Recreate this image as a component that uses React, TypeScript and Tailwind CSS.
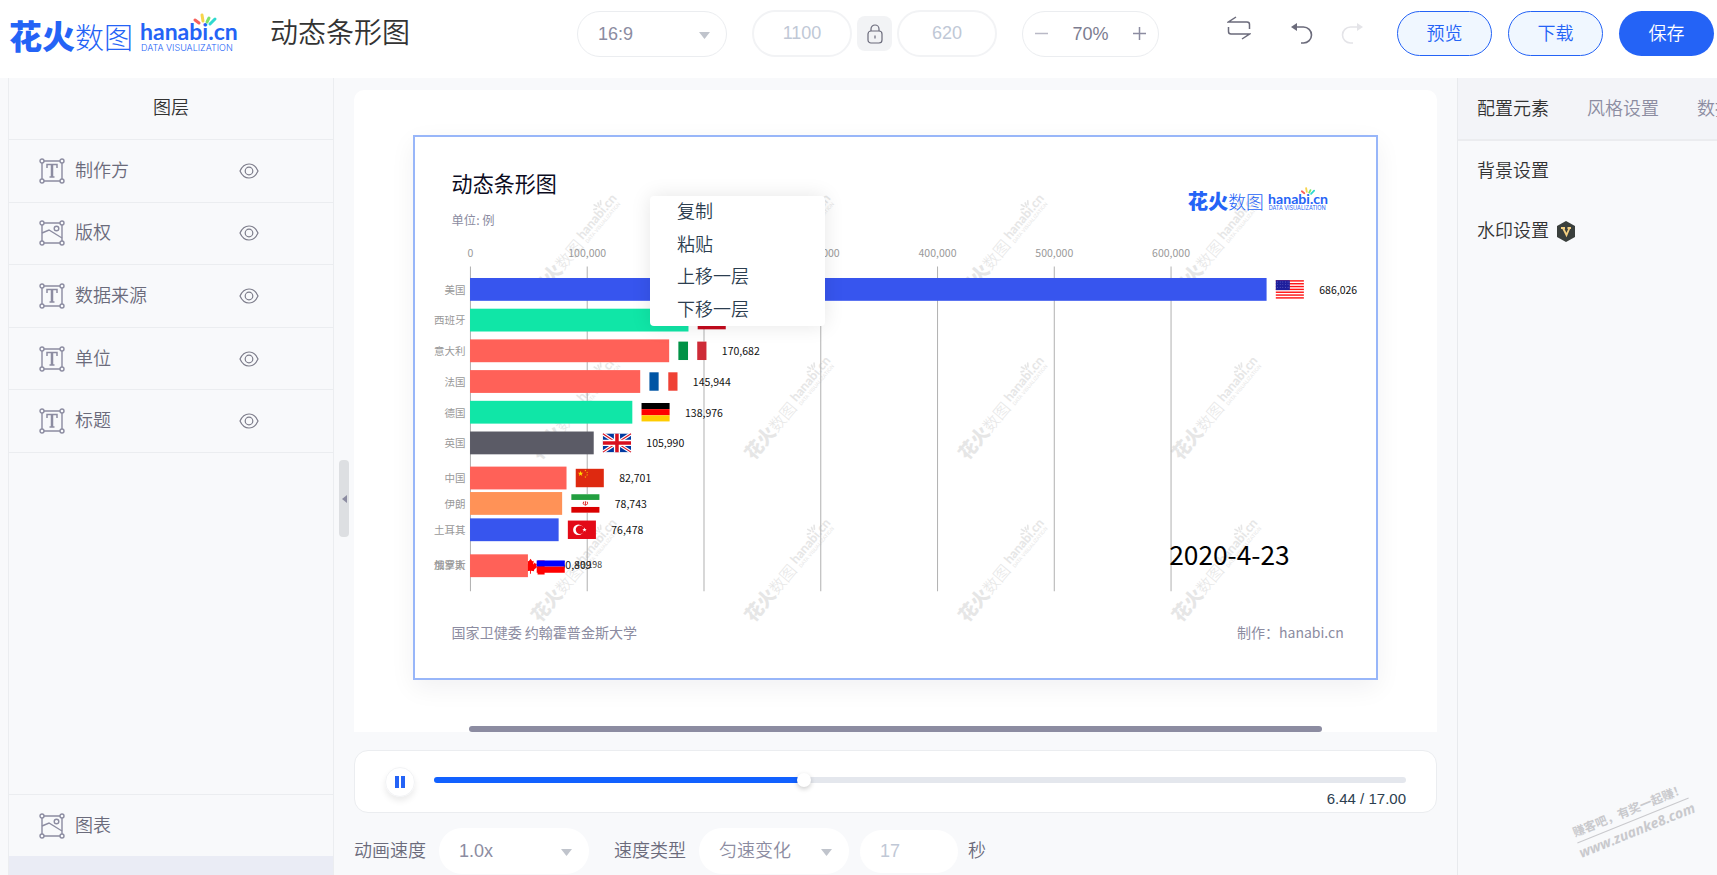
import React, { useState } from 'react'

type LayerKind = 'text' | 'image'

const LAYERS: { name: string; kind: LayerKind }[] = [
  { name: '制作方', kind: 'text' },
  { name: '版权', kind: 'image' },
  { name: '数据来源', kind: 'text' },
  { name: '单位', kind: 'text' },
  { name: '标题', kind: 'text' },
]

const BLUE = '#3755ee'
const GREEN = '#10e6a7'
const RED = '#ff6158'

// y and end are in canvas units (1100 x 620)
const BARS = [
  { name: '美国', value: '686,026', flag: 'us', color: BLUE, y: 163, end: 973 },
  { name: '西班牙', value: '188,068', flag: 'es', color: GREEN, y: 198, end: 314 },
  { name: '意大利', value: '170,682', flag: 'it', color: RED, y: 233, end: 292 },
  { name: '法国', value: '145,944', flag: 'fr', color: RED, y: 268, end: 259 },
  { name: '德国', value: '138,976', flag: 'de', color: GREEN, y: 303, end: 250 },
  { name: '英国', value: '105,990', flag: 'gb', color: '#5b5b66', y: 338, end: 206 },
  { name: '中国', value: '82,701', flag: 'cn', color: RED, y: 378, end: 175 },
  { name: '伊朗', value: '78,743', flag: 'ir', color: '#ff9257', y: 407, end: 170 },
  { name: '土耳其', value: '76,478', flag: 'tr', color: BLUE, y: 437, end: 166 },
]

const TICKS = ['0', '100,000', '200,000', '300,000', '400,000', '500,000', '600,000']
const AXIS_X = 65.5
const TICK_STEP = 133.1

function LogoArt({ mono }: { mono?: string }) {
  const main = mono ?? '#2463f6'
  return (
    <g fill={main}>
      <text x="0" y="35" fontSize="33" fontWeight="900" fontFamily="'Noto Sans CJK SC', sans-serif">花火</text>
      <text x="66" y="35" fontSize="29" fontWeight="300" fontFamily="'Noto Sans CJK SC', sans-serif">数图</text>
      <text x="131" y="26" fontSize="23" fontWeight="700" fontFamily="Lato, sans-serif">hanabi.cn</text>
      <text x="132" y="37" fontSize="9" fontFamily="Inter, sans-serif">DATA VISUALIZATION</text>
      <g strokeWidth="3" strokeLinecap="round" fill="none">
        <path d="M190 9l-4-3" stroke={mono ?? '#f8615c'} />
        <path d="M194 7l-1-6" stroke={mono ?? '#f7d44c'} />
        <path d="M198 8l2-4" stroke={mono ?? '#7fe36a'} />
        <path d="M201 10l5-5" stroke={mono ?? '#2fd9d0'} />
      </g>
    </g>
  )
}

function Star({ x, y, r, fill }: { x: number; y: number; r: number; fill: string }) {
  const points = Array.from({ length: 10 }, (_, i) => {
    const a = (Math.PI / 5) * i - Math.PI / 2
    const d = i % 2 === 0 ? r : r * 0.4
    return `${x + d * Math.cos(a)},${y + d * Math.sin(a)}`
  }).join(' ')
  return <polygon points={points} fill={fill} />
}

function Flag({ code }: { code: string }) {
  switch (code) {
    case 'us':
      return (
        <g>
          <rect width="32" height="21" fill="#fff" />
          {[0, 1, 2, 3, 4, 5, 6].map(i => (
            <rect key={i} y={i * 3.23} width="32" height="1.62" fill="#ff1414" />
          ))}
          <rect width="16" height="11.3" fill="#1e1e9c" />
          {[2, 5, 8].map(y => [2, 5, 8, 11, 14].map(x => <circle key={`${x}-${y}`} cx={x} cy={y} r=".5" fill="#8f8fd8" />))}
        </g>
      )
    case 'es':
      return (
        <g>
          <rect width="32" height="21" fill="#c60b1e" />
          <rect y="5" width="32" height="11" fill="#ffc400" />
        </g>
      )
    case 'it':
      return (
        <g>
          <rect width="32" height="21" fill="#fff" />
          <rect width="11" height="21" fill="#009246" />
          <rect x="21.5" width="10.5" height="21" fill="#ce2b37" />
        </g>
      )
    case 'fr':
      return (
        <g>
          <rect width="32" height="21" fill="#fff" />
          <rect width="10.5" height="21" fill="#0055a4" />
          <rect x="21.5" width="10.5" height="21" fill="#ef4135" />
        </g>
      )
    case 'de':
      return (
        <g>
          <rect width="32" height="7" fill="#000" />
          <rect y="7" width="32" height="7" fill="#f00" />
          <rect y="14" width="32" height="7" fill="#fc0" />
        </g>
      )
    case 'gb':
      return (
        <g>
          <rect width="32" height="21" fill="#0039a0" />
          <path d="M0 0L32 21M32 0L0 21" stroke="#fff" strokeWidth="4" />
          <path d="M0 0L32 21M32 0L0 21" stroke="#d80f1f" strokeWidth="1.3" />
          <path d="M16 0v21M0 10.5h32" stroke="#fff" strokeWidth="7" />
          <path d="M16 0v21M0 10.5h32" stroke="#d80f1f" strokeWidth="4" />
        </g>
      )
    case 'cn':
      return (
        <g>
          <rect width="32" height="21" fill="#de2910" />
          <Star x={5.5} y={5.5} r={3.3} fill="#ffde00" />
          <Star x={11} y={2} r={1.1} fill="#ffde00" />
          <Star x={13} y={4.2} r={1.1} fill="#ffde00" />
          <Star x={13} y={7} r={1.1} fill="#ffde00" />
          <Star x={11} y={9.4} r={1.1} fill="#ffde00" />
        </g>
      )
    case 'ir':
      return (
        <g>
          <rect width="32" height="21" fill="#fff" />
          <rect width="32" height="6.5" fill="#239f40" />
          <rect y="14.5" width="32" height="6.5" fill="#da0000" />
          <path d="M14 8.5q-1.5 2 1 4M18 8.5q1.5 2-1 4M16 8v5" stroke="#da0000" strokeWidth="1" fill="none" />
        </g>
      )
    case 'tr':
      return (
        <g>
          <rect width="32" height="21" fill="#e30a17" />
          <circle cx="12" cy="10.5" r="6" fill="#fff" />
          <circle cx="13.8" cy="10.5" r="4.8" fill="#e30a17" />
          <Star x={19} y={10.5} r={2.6} fill="#fff" />
        </g>
      )
    case 'ca':
      return (
        <g>
          <rect width="32" height="21" fill="#fff" />
          <rect width="8" height="21" fill="#f00" />
          <rect x="24" width="8" height="21" fill="#f00" />
          <path d="M16 3l2 3 1.6-.8-.6 4.5 2-2.4.6 1.5 1.6-.2-.6 2.8.8 1-3.600 3.400.4 1.600-3.700-.6V20h-1v-3.200l-3.700.6.4-1.600-3.600-3.400.8-1-.6-2.800 1.600.2.6-1.500 2 2.400-.6-4.500 1.600.8z" fill="#f00" />
        </g>
      )
    default:
      return (
        <g>
          <rect width="32" height="7" fill="#fff" />
          <rect y="7" width="32" height="7" fill="#00f" />
          <rect y="14" width="32" height="7" fill="#f00" />
        </g>
      )
  }
}

function ChartCanvas() {
  return (
    <svg
      viewBox="0 0 1100 620"
      className="block h-auto w-full font-normal"
      fontFamily="'Noto Sans CJK SC', 'Noto Sans', sans-serif"
      role="img"
      aria-label="动态条形图"
    >
      {[0, 1, 2].map(row =>
        [0, 1, 2, 3].map(col => (
          <g
            key={`${row}-${col}`}
            transform={`translate(${184 + col * 243.5} ${124 + row * 185}) rotate(-50) scale(.63) translate(-116 -19)`}
          >
            <LogoArt mono="#e6e6e6" />
          </g>
        ))
      )}

      {TICKS.map((tick, i) => (
        <g key={tick}>
          <line x1={AXIS_X + i * TICK_STEP} x2={AXIS_X + i * TICK_STEP} y1="150" y2="520" stroke="#b4b4b4" strokeWidth="1.2" />
          <text x={AXIS_X + i * TICK_STEP} y="139" textAnchor="middle" fontSize="12" fill="#999">{tick}</text>
        </g>
      ))}

      {BARS.map(bar => (
        <g key={bar.name}>
          <text x="60" y={bar.y + 18} textAnchor="end" fontSize="12" fill="#999">{bar.name}</text>
          <rect x={AXIS_X - 0.5} y={bar.y} width={bar.end - AXIS_X + 0.5} height="26" fill={bar.color} />
          <g transform={`translate(${bar.end + 10.5} ${bar.y + 2.5})`}>
            <Flag code={bar.flag} />
          </g>
          <text x={bar.end + 60} y={bar.y + 18} fontSize="12" fill="#111">{bar.value}</text>
        </g>
      ))}

      {/* two entries swapping places */}
      <g>
        <text x="60" y="495" textAnchor="end" fontSize="12" fill="#999">加拿大</text>
        <text x="60" y="495" textAnchor="end" fontSize="12" fill="#999">俄罗斯</text>
        <g transform="translate(118 480)"><Flag code="ca" /></g>
        <rect x="65" y="478" width="66" height="26" fill={RED} />
        <text x="167" y="495" fontSize="12" fill="#111">50,809</text>
        <g transform="translate(141 478)"><Flag code="ru" /></g>
        <text x="185" y="494" fontSize="10" fill="#333">49,198</text>
      </g>

      <text x="44" y="65" fontSize="24" fill="#0b0b1e">动态条形图</text>
      <text x="44" y="103" fontSize="14" fill="#8c8ca1">单位: 例</text>
      <g transform="translate(883 60) scale(.7)">
        <LogoArt />
      </g>
      <text x="862" y="490" fontSize="30" fill="#000">2020-4-23</text>
      <text x="44" y="573" fontSize="16" fill="#8c8ca1">国家卫健委 约翰霍普金斯大学</text>
      <text x="1061" y="573" textAnchor="end" fontSize="16" fill="#8c8ca1">制作：hanabi.cn</text>
    </svg>
  )
}

function LayerIcon({ kind }: { kind: LayerKind }) {
  return (
    <svg width="26" height="26" viewBox="0 0 26 26" fill="none" stroke="#8c8ca1" strokeWidth="1.4">
      <path d="M5 3h16M5 23h16M3 5v16M23 5v16" />
      <circle cx="3" cy="3" r="2" />
      <circle cx="23" cy="3" r="2" />
      <circle cx="3" cy="23" r="2" />
      <circle cx="23" cy="23" r="2" />
      {kind === 'text' ? (
        <>
          <path d="M8 10V6.500h10V10M10.500 19h5" strokeWidth="1.500" />
          <path d="M13 6.500V19" strokeWidth="2.500" />
        </>
      ) : (
        <>
          <path d="M3 13l7-3 13 8" />
          <circle cx="17.5" cy="8.5" r="2.3" />
        </>
      )}
    </svg>
  )
}

function EyeIcon() {
  return (
    <svg width="20" height="16" viewBox="0 0 20 16" fill="none" stroke="#7c7c8a" strokeWidth="1.2">
      <path d="M1 8c2-4.500 5.300-7 9-7s7 2.500 9 7c-2 4.500-5.300 7-9 7s-7-2.500-9-7z" />
      <circle cx="10" cy="8" r="3.8" />
    </svg>
  )
}

function Caret() {
  return (
    <svg width="11" height="7" viewBox="0 0 11 7" className="pointer-events-none absolute right-[17px] bottom-[18px]">
      <path d="M0 0h11L5.500 7z" fill="#c0c4cc" />
    </svg>
  )
}

function PillSelect({ label, value, bordered }: { label: string; value: string; bordered?: boolean }) {
  return (
    <div className="relative shrink-0">
      <select
        aria-label={label}
        className={`block h-[46px] w-[150px] appearance-none rounded-full bg-white pl-5 text-lg text-[#8c8ca1] ${bordered ? 'border border-[#ebedf0]' : ''}`}
      >
        <option>{value}</option>
      </select>
      <Caret />
    </div>
  )
}

function Header() {
  return (
    <header className="flex h-[78px] shrink-0 items-center bg-white pr-[3px] pb-[11px] pl-[9px]">
      <div className="flex w-[568px] shrink-0 items-center">
        <svg width="230" height="40" viewBox="0 0 230 40" className="overflow-visible" role="img" aria-label="花火数图">
          <LogoArt />
        </svg>
        <h1 className="ml-[31px] text-[28px] leading-9 text-[#333]">动态条形图</h1>
      </div>

      <PillSelect label="画布比例" value="16:9" bordered />
      <div className="ml-[25px] flex items-center gap-[5px]">
        <input aria-label="宽度" defaultValue="1100" disabled className="h-[47px] w-[100px] rounded-full border-2 border-[#f2f3f5] bg-white text-center text-lg text-[#c0c8d6]" />
        <button aria-label="锁定比例" className="flex h-[35px] w-[35px] items-center justify-center rounded-lg bg-[#f2f3f5]">
          <svg width="16" height="20" viewBox="0 0 16 20" fill="none" stroke="#6b6b7b" strokeWidth="1.2">
            <rect x="1" y="7" width="14" height="12" rx="3" />
            <path d="M4 7V5a4 4 0 018 0v2M8 11.500v3" />
          </svg>
        </button>
        <input aria-label="高度" defaultValue="620" disabled className="h-[47px] w-[100px] rounded-full border-2 border-[#f2f3f5] bg-white text-center text-lg text-[#c0c8d6]" />
      </div>
      <div className="ml-[25px] flex h-[46px] w-[137px] shrink-0 items-center justify-between rounded-full border border-[#ebedf0] px-3 text-lg text-[#7c7c8f]">
        <button aria-label="缩小">
          <svg width="13" height="13" viewBox="0 0 13 13" stroke="#b9b9c6" strokeWidth="1.5"><path d="M0 6.500h13" /></svg>
        </button>
        <span>70%</span>
        <button aria-label="放大">
          <svg width="13" height="13" viewBox="0 0 13 13" stroke="#8c8ca1" strokeWidth="1.5"><path d="M0 6.500h13M6.500 0v13" /></svg>
        </button>
      </div>

      <div className="ml-auto flex items-center">
        <button aria-label="切换">
          <svg width="24" height="36" viewBox="0 0 24 36" fill="none" stroke="#6b6b7b" strokeWidth="1.5">
            <path d="M9 1L1.500 6H20q2.500 0 2.500 2.500V13" />
            <path d="M15 23l7.500-5H4q-2.500 0-2.500-2.500V11" />
          </svg>
        </button>
        <button aria-label="撤销" className="ml-10">
          <svg width="22" height="22" viewBox="0 0 22 22" fill="none" stroke="#6b6b7b" strokeWidth="1.6">
            <path d="M5 4h7.500a8 8 0 010 16H10" />
            <path d="M6 0v8L0 4z" fill="#6b6b7b" stroke="none" />
          </svg>
        </button>
        <button aria-label="重做" className="ml-7">
          <svg width="22" height="22" viewBox="0 0 22 22" fill="none" stroke="#e4e4e8" strokeWidth="1.6">
            <path d="M17 4H9.500a8 8 0 000 16H12" />
            <path d="M16 0v8l6-4z" fill="#e4e4e8" stroke="none" />
          </svg>
        </button>
        <div className="ml-[34px] flex gap-4 text-lg">
          <button className="h-[45px] w-[95px] rounded-full border border-[#2463f6] bg-[#f0f7ff] text-[#2463f6]">预览</button>
          <button className="h-[45px] w-[95px] rounded-full border border-[#2463f6] bg-[#f0f7ff] text-[#2463f6]">下载</button>
          <button className="h-[45px] w-[95px] rounded-full bg-[#2463f6] text-white">保存</button>
        </div>
      </div>
    </header>
  )
}

function LayerPanel() {
  return (
    <aside className="ml-2 flex w-[326px] shrink-0 flex-col border-x border-[#ebedf0]">
      <h2 className="h-[62px] shrink-0 border-b border-[#ebedf0] text-center text-lg leading-[60px] text-[#333]">图层</h2>
      <ul className="grid h-[313px] shrink-0 grid-rows-5">
        {LAYERS.map(layer => (
          <li key={layer.name} className="flex items-center border-b border-[#ebedf0] pl-[30px] text-lg text-[#6b6b7b]">
            <LayerIcon kind={layer.kind} />
            <span className="w-[174px] pl-[10px]">{layer.name}</span>
            <button aria-label="显示或隐藏"><EyeIcon /></button>
          </li>
        ))}
      </ul>
      <div className="mt-auto flex h-[62px] shrink-0 items-center border-t border-[#ebedf0] pl-[30px] text-lg text-[#6b6b7b]">
        <LayerIcon kind="image" />
        <span className="pl-[10px]">图表</span>
      </div>
      <div className="h-[19px] shrink-0 bg-[#eaecf5]" />
    </aside>
  )
}

function ContextMenu() {
  return (
    <ul className="absolute top-[106px] left-[296px] grid h-[130px] w-[175px] grid-rows-4 rounded bg-white text-lg text-[#2c3e50] shadow-[0_0_20px_rgba(0,0,0,0.1)]">
      {['复制', '粘贴', '上移一层', '下移一层'].map(item => (
        <li key={item} className="flex">
          <button className="w-full pl-[27px] text-left leading-8">{item}</button>
        </li>
      ))}
    </ul>
  )
}

function Player() {
  const [time, setTime] = useState(6.44)
  const total = 17
  const pct = (time / total) * 100

  return (
    <div className="mt-[18px] flex h-[63px] shrink-0 rounded-[14px] border border-[#ebedf0] bg-white px-[30px]">
      <button aria-label="暂停" className="mt-4 flex h-[30px] w-[30px] shrink-0 items-center justify-center rounded-full border border-[#f2f3f5] shadow-[0_4px_6px_rgba(0,0,0,0.08)]">
        <svg width="10" height="12" viewBox="0 0 10 12" fill="#2463f6">
          <rect width="4" height="12" />
          <rect x="6" width="4" height="12" />
        </svg>
      </button>
      <div className="ml-[19px] flex flex-1 flex-col pt-[26px]">
        <input
          type="range"
          aria-label="播放进度"
          min="0"
          max={total}
          step="0.01"
          value={time}
          onChange={e => setTime(Number(e.target.value))}
          className="block h-[6px] w-full appearance-none rounded-full [&::-webkit-slider-thumb]:h-[14px] [&::-webkit-slider-thumb]:w-[14px] [&::-webkit-slider-thumb]:appearance-none [&::-webkit-slider-thumb]:rounded-full [&::-webkit-slider-thumb]:bg-white [&::-webkit-slider-thumb]:shadow-[0_2px_5px_rgba(0,0,0,0.2)]"
          style={{ background: `linear-gradient(to right, #1261ff ${pct}%, #e4e7ed ${pct}%)` }}
        />
        <div className="mt-2 text-right text-[15px] leading-4 text-[#2c3e50]">{time.toFixed(2)} / {total.toFixed(2)}</div>
      </div>
    </div>
  )
}

function Stage() {
  return (
    <main className="flex min-w-0 flex-1 flex-col pr-5 pb-px">
      <section className="relative mt-3 flex flex-1 flex-col justify-between rounded-t-[10px] bg-white pt-[45px]">
        <div className="mx-[59px] bg-white pb-px shadow-[inset_0_0_0_2px_#98b6f9,0_8px_24px_rgba(0,0,50,0.06)]">
          <ChartCanvas />
        </div>
        <div className="mx-[115px] h-[6px] rounded-full bg-[#8c8ca1]" />
        <ContextMenu />
      </section>
      <Player />
      <div className="mt-[15px] flex shrink-0 items-center text-lg text-[#6b6b7b]">
        <span className="w-[85px]">动画速度</span>
        <PillSelect label="动画速度" value="1.0x" />
        <span className="ml-[25px] w-[85px]">速度类型</span>
        <PillSelect label="速度类型" value="匀速变化" />
        <input id="seconds" defaultValue="17" disabled className="ml-[11px] h-[43px] w-[98px] rounded-full bg-white pl-5 text-[#c0c8d6]" />
        <label htmlFor="seconds" className="ml-[10px]">秒</label>
      </div>
    </main>
  )
}

function ConfigPanel() {
  return (
    <aside className="relative w-[260px] shrink-0 overflow-hidden border-l border-[#e8eaed] text-lg text-[#333]">
      <nav className="flex h-[63px] gap-[38px] border-b-2 border-[#ebecef] bg-[#f3f4f8] pl-[19px] leading-[60px] whitespace-nowrap">
        <button>配置元素</button>
        <button className="text-[#8c8ca1]">风格设置</button>
        <button className="text-[#8c8ca1]">数据设置</button>
      </nav>
      <div className="pl-[19px] leading-[60px]">
        <div>背景设置</div>
        <div className="flex items-center gap-2">
          水印设置
          <svg width="18" height="21" viewBox="0 0 18 21">
            <path d="M9 0l9 5v11l-9 5-9-5V5z" fill="#3a3f3c" />
            <path d="M4 7h4M10.500 7H14M6 7l3.500 7L12.500 7" stroke="#f3cf80" strokeWidth="1.8" fill="none" />
          </svg>
        </div>
      </div>
      <div className="absolute right-[23px] bottom-[34px] flex w-[122px] -rotate-[22deg] flex-col items-center font-bold whitespace-nowrap text-[#c9c9cd]">
        <span className="border-b border-[#c9c9cd] text-[12px] leading-5">赚客吧，有奖一起赚！</span>
        <span className="font-['Open_Sans'] text-[14px] leading-5 italic">www.zuanke8.com</span>
      </div>
    </aside>
  )
}

export default function App() {
  return (
    <div className="flex h-screen min-h-[700px] flex-col overflow-hidden bg-[#f8f9fb] font-['Liberation_Sans','Noto_Sans_CJK_SC',sans-serif] font-[350]">
      <Header />
      <div className="flex min-h-0 flex-1">
        <LayerPanel />
        <div className="flex w-5 shrink-0 items-center pl-[5px]">
          <button aria-label="收起图层" className="mt-11 flex h-[77px] w-[10px] items-center justify-center rounded bg-[#dddfe2]">
            <svg width="5" height="8" viewBox="0 0 5 8"><path d="M5 0v8L0 4z" fill="#8c8ca1" /></svg>
          </button>
        </div>
        <Stage />
        <ConfigPanel />
      </div>
    </div>
  )
}
